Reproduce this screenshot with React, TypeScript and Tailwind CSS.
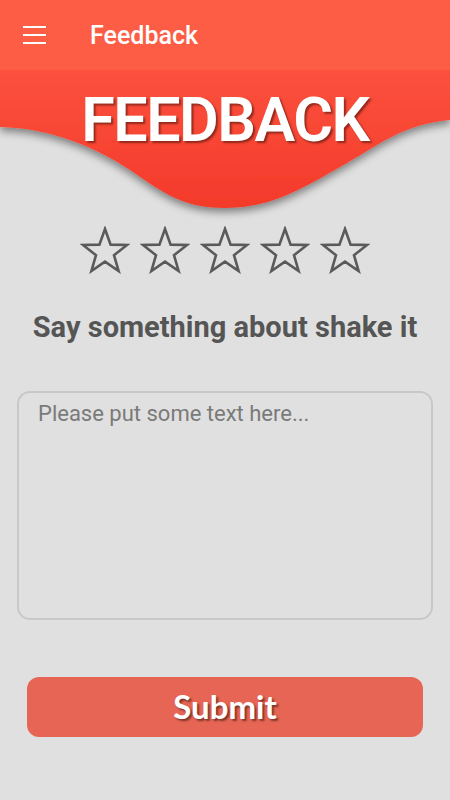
import React from "react";

function Star() {
  return (
    <svg width="50" height="48" viewBox="0 0 50 48" fill="none">
      <path
        d="M25 3 L30.6 18.6 L47 19 L34 29.2 L38.6 45 L25 35.6 L11.4 45 L16 29.2 L3 19 L19.4 18.6 Z"
        stroke="#5a5a5a"
        strokeWidth="2.6"
        strokeLinejoin="miter"
      />
    </svg>
  );
}

export default function App() {
  return (
    <div className="w-[450px] h-[800px] bg-[#e0e0e0] flex flex-col overflow-hidden" style={{ fontFamily: "Roboto, 'Noto Sans', sans-serif" }}>
      {/* App bar */}
      <div className="h-[70px] bg-[#fd5d44] flex items-center shrink-0">
        <div className="w-[90px] pl-[23px] flex flex-col gap-[5.5px]">
          <div className="w-[23px] h-[2.5px] bg-white" />
          <div className="w-[23px] h-[2.5px] bg-white" />
          <div className="w-[23px] h-[2.5px] bg-white" />
        </div>
        <span className="text-white text-[25px] font-medium pt-[2px]">Feedback</span>
      </div>

      {/* Banner */}
      <div className="relative h-[150px] shrink-0 -mb-[5px]">
        <svg className="absolute inset-0" width="450" height="150" viewBox="0 0 450 150">
          <defs>
            <linearGradient id="bg" x1="0" y1="0" x2="0" y2="1">
              <stop offset="0" stopColor="#fc513d" />
              <stop offset="1" stopColor="#f33a2b" />
            </linearGradient>
            <filter id="sh" x="-10%" y="-10%" width="120%" height="130%">
              <feDropShadow dx="0" dy="4" stdDeviation="4" floodColor="#000" floodOpacity="0.45" />
            </filter>
          </defs>
          <path
            d="M0 0 H450 V50 C400 55 380 75 340 97 C300 120 270 138 225 138 C180 138 160 120 130 100 C95 77 50 58 0 57 Z"
            fill="url(#bg)"
            filter="url(#sh)"
          />
        </svg>
        <div className="relative flex justify-center pt-[20px]">
          <span
            className="text-white text-[61px] font-semibold leading-none tracking-[-1.5px]"
            style={{ fontFamily: "Roboto, sans-serif", textShadow: "2px 2px 2px rgba(80,20,10,0.6)" }}
          >
            FEEDBACK
          </span>
        </div>
      </div>

      {/* Stars */}
      <div className="flex justify-center gap-[10px] mt-[11px]">
        <Star />
        <Star />
        <Star />
        <Star />
        <Star />
      </div>

      <div className="text-center text-[#555] text-[29px] font-bold mt-[36px] leading-[34px]">Say something about shake it</div>

      <div className="mx-[17px] mt-[47px] h-[229px] rounded-[13px] border-2 border-[#c8c8c8] px-[19px] pt-[4px]">
        <span className="text-[#7a7a7a] text-[22px]">Please put some text here...</span>
      </div>

      <div className="mx-[27px] mt-[57px] h-[60px] rounded-[12px] bg-[#e66554] flex items-center justify-center">
        <span
          className="text-white text-[33px] font-bold"
          style={{ fontFamily: "Lato, sans-serif", textShadow: "2px 2px 2px rgba(60,20,10,0.6)" }}
        >
          Submit
        </span>
      </div>
    </div>
  );
}
